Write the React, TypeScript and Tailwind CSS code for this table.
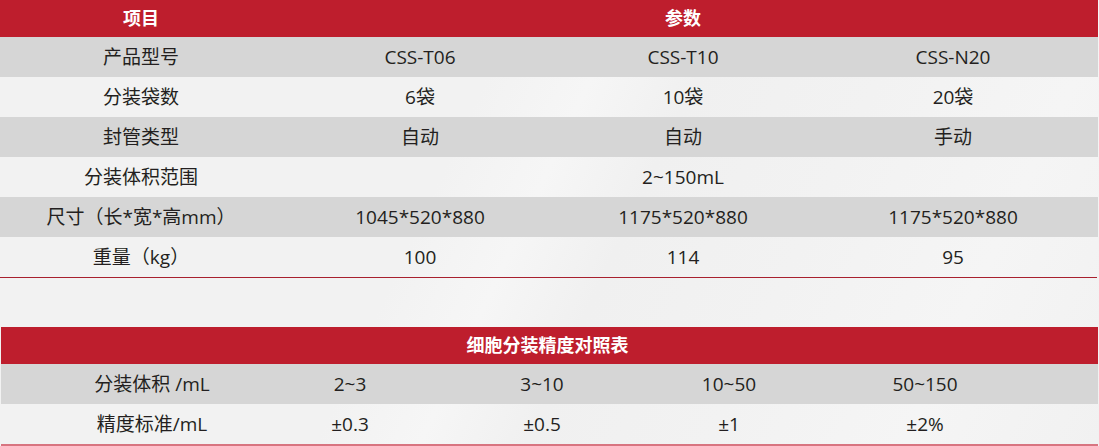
const font = { fontFamily: '"Open Sans", "Noto Sans CJK SC", sans-serif' };

const specRows: { label: string; values: string[]; span?: boolean }[] = [
  { label: "产品型号", values: ["CSS-T06", "CSS-T10", "CSS-N20"] },
  { label: "分装袋数", values: ["6袋", "10袋", "20袋"] },
  { label: "封管类型", values: ["自动", "自动", "手动"] },
  { label: "分装体积范围", values: ["2~150mL"], span: true },
  { label: "尺寸（长*宽*高mm）", values: ["1045*520*880", "1175*520*880", "1175*520*880"] },
  { label: "重量（kg）", values: ["100", "114", "95"] },
];

const precisionRows = [
  { label: "分装体积 /mL", values: ["2~3", "3~10", "10~50", "50~150"] },
  { label: "精度标准/mL", values: ["±0.3", "±0.5", "±1", "±2%"] },
];

export default function App() {
  return (
    <div
      className="w-[1099px] h-[446px] overflow-hidden bg-[#f2f2f2] bg-[linear-gradient(115deg,#f2f2f2_0%,#f2f2f2_40%,#f6f6f6_48%,#f0f0f0_56%,#f2f2f2_70%,#f5f5f5_85%,#f1f1f1_100%)] text-[19px] text-[#231f20]"
      style={font}
    >
      {/* 参数表 */}
      <div className="w-[1098px]">
        <div className="grid grid-cols-[282px_276px_250px_1fr] h-[37px] bg-[#be1e2d] text-white text-[18px] font-bold items-center">
          <div className="text-center">项目</div>
          <div className="col-span-3 text-center pr-[14px]">参数</div>
        </div>
        {specRows.map((row, i) => (
          <div
            key={row.label}
            className={`grid grid-cols-[282px_276px_250px_1fr] h-[40px] items-center ${
              i % 2 === 0 ? "bg-[#d6d6d6]" : ""
            }`}
          >
            <div className="text-center">{row.label}</div>
            {row.span ? (
              <div className="col-span-3 text-center pr-[14px]">{row.values[0]}</div>
            ) : (
              row.values.map((v, j) => (
                <div key={j} className="text-center">
                  {v}
                </div>
              ))
            )}
          </div>
        ))}
        <div className="h-px w-[1097px] bg-[#a8202e]" />
      </div>

      <div className="h-[49px]" />

      {/* 细胞分装精度对照表 */}
      <div className="w-[1098px] pl-px">
        <div className="h-[37px] bg-[#be1e2d] text-white text-[18px] font-bold flex items-center justify-center pr-[4px]">
          细胞分装精度对照表
        </div>
        {precisionRows.map((row, i) => (
          <div
            key={row.label}
            className={`grid grid-cols-[198px_198px_186px_188px_204px] pl-[52px] h-[40px] items-center ${
              i % 2 === 0 ? "bg-[#d6d6d6]" : ""
            }`}
          >
            <div className="text-center">{row.label}</div>
            {row.values.map((v, j) => (
              <div key={j} className="text-center">
                {v}
              </div>
            ))}
          </div>
        ))}
        <div className="h-[2px] bg-[#d87480]" />
      </div>
    </div>
  );
}
